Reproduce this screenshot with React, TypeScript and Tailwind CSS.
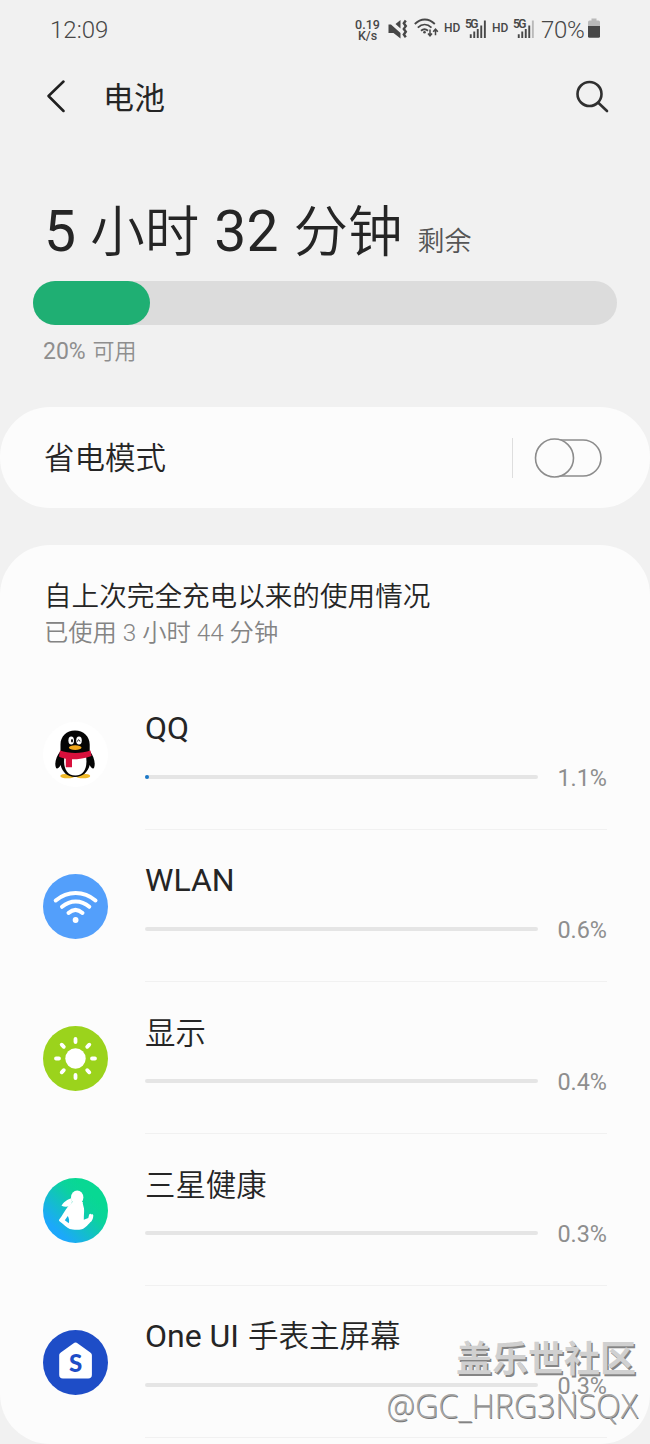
import React from 'react';

type Usage = {
  name: React.ReactNode;
  percent: string;
  value: number;
  icon: React.ReactNode;
  nameClass: string;
};

const QQIcon = () => (
  <svg viewBox="0 0 65 65" className="h-[65px] w-[65px]">
    <circle cx="32.5" cy="32.5" r="32.5" fill="#fff" />
    <ellipse cx="24.5" cy="54" rx="7.2" ry="2.3" fill="#f0b92a" />
    <ellipse cx="40" cy="54" rx="7.2" ry="2.3" fill="#f0b92a" />
    <path d="M32 8.500c-8.500 0-14.500 6-14.500 14v6.500c-3 4-5.200 8.500-5.200 13 0 2.500.8 4.500 1.700 4.500 1.200 0 2.600-1.500 3.600-3.500 1.500 7 6.900 12 14.400 12s13.200-5 14.700-12c1 2 2.200 3.500 3.400 3.500.9 0 1.600-2 1.600-4.500 0-4.500-2-9-5-13v-6.500c0-8-6.200-14-14.700-14z" fill="#050505" />
    <path d="M21.500 34c-1.500 10 1 19.500 10.800 19.500s12.300-9.500 10.700-19.500z" fill="#fff" />
    <path d="M17 28.500c8.500 3.300 22 3.300 30.500 0l1 5.500c-6 2.500-13 3.300-19.500 3.300v8h-6.200v-8.500c-3-.5-5.300-1.300-6.800-2.300z" fill="#d8103c" />
    <ellipse cx="28.200" cy="18.500" rx="2.800" ry="3.900" fill="#fff" />
    <ellipse cx="36" cy="18.500" rx="2.800" ry="3.900" fill="#fff" />
    <ellipse cx="29" cy="18.800" rx="1" ry="1.700" fill="#111" />
    <path d="M34.500 19.500c.3-2.200 2-2.200 2.400 0" fill="none" stroke="#111" strokeWidth="1" />
    <ellipse cx="32.200" cy="25.600" rx="6.300" ry="2.400" fill="#f3a81b" />
  </svg>
);

const WlanIcon = () => (
  <svg viewBox="0 0 65 65" className="h-[65px] w-[65px]" fill="none" stroke="#fff" strokeWidth="4" strokeLinecap="round">
    <circle cx="32.5" cy="32.5" r="32.5" fill="#539ffb" stroke="none" />
    <path d="M12.700 26.500c12-10 28-10 39.800 0" />
    <path d="M19 32.800c8.500-7 19-7 27.300 0" />
    <path d="M25.500 39c4.500-4 9.500-4 14 0" />
    <circle cx="32.600" cy="46" r="2.900" fill="#fff" stroke="none" />
  </svg>
);

const DisplayIcon = () => (
  <svg viewBox="0 0 65 65" className="h-[65px] w-[65px]" stroke="#fff" strokeWidth="3.8" strokeLinecap="round">
    <circle cx="32.5" cy="32.5" r="32.5" fill="#9bd31c" stroke="none" />
    <circle cx="32.5" cy="32.5" r="10.2" fill="#fff" stroke="none" />
    <path d="M32.500 13v3M32.500 49v3M13 32.500h3M49 32.500h3M18.700 18.700l2.100 2.100M44.200 44.200l2.100 2.100M18.700 46.300l2.100-2.100M44.200 20.800l2.100-2.100" />
  </svg>
);

const HealthIcon = () => (
  <svg viewBox="0 0 65 65" className="h-[65px] w-[65px]">
    <defs>
      <linearGradient id="health" x1="0.25" y1="0.85" x2="0.8" y2="0.3">
        <stop offset="0" stopColor="#1ca8fb" />
        <stop offset="0.75" stopColor="#0bd39c" />
        <stop offset="1" stopColor="#08d893" />
      </linearGradient>
    </defs>
    <circle cx="32.5" cy="32.5" r="32.5" fill="url(#health)" />
    {/* head and ponytail */}
    <ellipse cx="34.200" cy="19.500" rx="6.200" ry="7" fill="#fff" />
    <path d="M28.500 20c-2.500 1.500-6.500 2-10 7.800 4 1.800 9 1.500 10.500-3.800z" fill="#fff" />
    {/* torso and arms */}
    <path d="M29.500 24h10.300c-.3 2 .8 4 1.200 6.500.4 3-.2 6-.2 11.200l4.500-1.700.8-3.200c.5-1.400 2-1.200 2.300-.2 1.100-.8 2-.1 1.900 1.200-.2 2.600-.8 4.300-2 5.700-2.800 2-5.300 6.500-9.500 7.800-4 .9-9 .6-12-.3-2.800-1.500-6-4.200-10-7.500-.9-.7-1.100-1.500-.4-2.300 2.600-2.900 5.600-9 8.800-12.900 1-1.100 2.300-1.800 4.300-4.300z" fill="#fff" />
    <path d="M24.800 38l-3 4.200 4 3c.7-2.500.2-4.700-1-7.200z" fill="#15b2e4" />
  </svg>
);

const WatchIcon = () => (
  <svg viewBox="0 0 65 65" className="h-[65px] w-[65px]">
    <circle cx="32.5" cy="32.5" r="32.5" fill="#1e4dc7" />
    <path d="M30.300 13.400c1.500-1.200 3-1.200 4.500 0l12.500 9.200c1.100.9 1.600 1.700 1.600 3v19.200c0 2.500-1.300 3.700-3.700 3.700h-25.300c-2.400 0-3.700-1.200-3.700-3.700v-19.200c0-1.300.5-2.100 1.600-3z" fill="#fff" />
    <text x="32.700" y="42.300" textAnchor="middle" fontSize="24" fontWeight="900" fill="#1e4dc7" className="font-['Lato',sans-serif]">S</text>
  </svg>
);

const MuteIcon = () => (
  <svg viewBox="0 0 20 20" className="h-5 w-5" fill="#474747">
    <path d="M.5 5.500h2.500l9.500 8.500v5.500l-7-5.500h-5zM12.500 1v8.500L7.500 5z" />
    <path d="M17.800 1.500l-2 2.800 2 2.800-2 2.800 2 2.800-2 2.800 2 2.800" fill="none" stroke="#474747" strokeWidth="2.400" />
  </svg>
);

const WifiStatusIcon = () => (
  <svg viewBox="0 0 25 20" className="h-5 w-[25px]" fill="none" stroke="#474747" strokeWidth="1.8">
    <path d="M.8 6c6-6 14-6 20 0M3.800 9.600c4.200-4 9.500-4 13.700 0M7 12.800c2.300-2 4.700-2 7 0" />
    <circle cx="10.500" cy="14.300" r="1.300" fill="#474747" stroke="none" />
    <path d="M16 11.500v6M14 15.500l2 2.300 2-2.300M21.500 17.300v-5.600M19.200 13.800l2.300-2.600 2.300 2.600" strokeWidth="1.5" />
  </svg>
);

const Signal = ({ weak }: { weak?: boolean }) => (
  <svg viewBox="0 -4 22 24" className="h-6 w-[22px] overflow-visible" fill="#474747">
    <text x="0" y="9" fontSize="12" fontWeight="600" textLength="13.5" className="font-['Roboto',sans-serif]">5G</text>
    <path d="M4.800 15.300h1.900v3.700H4.800zM8.300 12.500h1.900v6.500H8.300zM11.800 10h1.900v9h-1.900zM15.300 6.500h1.900v12.500h-1.900z" />
    <path d="M18.900 1.500h1.900v17.500h-1.900z" fill={weak ? '#b9b9b9' : '#474747'} />
  </svg>
);

const StatusBar = () => (
  <div className="flex h-[60px] shrink-0 items-center pl-[50px] text-[#474747]">
    <span className="w-[305px] text-[24px] font-light leading-6">12:09</span>
    <div className="w-[25px] whitespace-nowrap text-center text-[12.5px] font-medium leading-[11px]">
      <div>0.19</div>
      <div>K/s</div>
    </div>
    <div className="-mt-0.5 ml-2"><MuteIcon /></div>
    <div className="-mt-1 ml-[6px]"><WifiStatusIcon /></div>
    <span className="-mt-1 ml-[5px] w-[17px] text-[12px] font-medium leading-4">HD</span>
    <div className="-mt-1.5 ml-[4px]"><Signal /></div>
    <span className="-mt-1 ml-[5px] w-[17px] text-[12px] font-medium leading-4">HD</span>
    <div className="-mt-1.5 ml-[4px]"><Signal weak /></div>
    <span className="ml-[6px] w-[47px] text-[24px] font-light leading-6 tracking-[-0.3px]">70%</span>
    <svg viewBox="0 0 12 20" className="-mt-1 h-5 w-3">
      <path d="M3.500 0.500h5v2h2q1.500 0 1.500 1.500v5H0v-5q0-1.500 1.500-1.500h2z" fill="#b9b9b9" />
      <path d="M0 8h12v10.200q0 1.500-1.500 1.500h-9q-1.500 0-1.500-1.500z" fill="#474747" />
    </svg>
  </div>
);

const usages: Usage[] = [
  { name: 'QQ', percent: '1.1%', value: 1.1, icon: <QQIcon />, nameClass: 'text-[32px] leading-10' },
  { name: 'WLAN', percent: '0.6%', value: 0, icon: <WlanIcon />, nameClass: 'text-[32px] leading-10' },
  { name: '显示', percent: '0.4%', value: 0, icon: <DisplayIcon />, nameClass: 'text-[30.4px] leading-[43px] font-[350]' },
  { name: '三星健康', percent: '0.3%', value: 0, icon: <HealthIcon />, nameClass: 'text-[30.4px] leading-[43px] font-[350]' },
  {
    name: <>One UI <span className="ml-px text-[30.5px] font-[350]">手表主屏幕</span></>,
    percent: '0.3%',
    value: 0,
    icon: <WatchIcon />,
    nameClass: 'text-[32px] leading-[41px]',
  },
];

const UsageRow = ({ item }: { item: Usage }) => (
  <div className="flex h-[152.2px] shrink-0 pl-[43px]">
    <div className="pt-[44px]">{item.icon}</div>
    <div className="ml-[37px] w-[462px] border-b border-[#f1f1f1] pt-[30px]">
      <div className={`h-10 whitespace-nowrap text-[#252525] ${item.nameClass}`}>{item.name}</div>
      <div className="mt-[14px] flex h-[30px] items-center">
        <div className="h-1 w-[393px] rounded-full bg-[#e5e5e5]">
          {item.value > 0 && (
            <div className="h-1 rounded-full bg-[#1a78c8]" style={{ width: `${item.value}%` }} />
          )}
        </div>
        <span className="ml-auto h-[30px] text-[23.4px] leading-[32px] text-[#8e8e8e]">{item.percent}</span>
      </div>
    </div>
  </div>
);

const App: React.FC = () => {
  return (
    <div className="relative flex h-[1444px] w-[650px] flex-col overflow-hidden bg-[#f1f1f1] font-['Roboto','Noto_Sans_CJK_SC',sans-serif]">
      <StatusBar />

      {/* Title bar */}
      <header className="flex h-[73px] shrink-0 items-center pl-[46px] pr-[41px]">
        <svg viewBox="0 0 20 34" className="h-[34px] w-5" fill="none" stroke="#202020" strokeWidth="2.5" strokeLinecap="round" strokeLinejoin="round">
          <path d="M17.500 1.500L2.500 16L17.500 31" />
        </svg>
        <h1 className="ml-[37px] mt-[4px] text-[31px] leading-10 text-[#252525]">电池</h1>
        <svg viewBox="0 0 34 34" className="ml-auto h-[34px] w-[34px]" fill="none" stroke="#303030" strokeWidth="2.6" strokeLinecap="round">
          <circle cx="14.500" cy="14" r="12" />
          <path d="M23.300 22.800l8.700 8.200" />
        </svg>
      </header>

      {/* Remaining time */}
      <section className="h-[274px] shrink-0 px-[33px] pt-[65px]">
        <div className="flex h-[68px] items-baseline pl-[11px] leading-[68px] text-[#252525]">
          <span className="whitespace-pre text-[57px]">5 </span>
          <span className="text-[54.5px] font-[350]">小时</span>
          <span className="ml-px whitespace-pre text-[57px]"> 32 </span>
          <span className="ml-px text-[54.5px] font-[350]">分钟</span>
          <span className="ml-[15px] text-[27px] font-[350] text-[#555]">剩余</span>
        </div>
        <div className="mt-[15px] h-[44px] rounded-full bg-[#dcdcdc]">
          <div className="h-full w-[117px] rounded-full bg-[#1faf73]" />
        </div>
        <div className="mt-[11px] pl-[10px] text-[23px] leading-[32px] text-[#8e8e8e]">
          20% <span className="ml-px text-[22px] font-[350]">可用</span>
        </div>
      </section>

      {/* Power saving */}
      <section className="flex h-[101px] shrink-0 items-center rounded-[50px] bg-[#fcfcfc] pl-[44px]">
        <span className="mt-0.5 text-[30.5px] font-[350] leading-10 text-[#252525]">省电模式</span>
        <div className="ml-auto mr-[21px] h-10 w-px bg-[#dedede]" />
        <svg viewBox="0 0 68 40" className="mr-[48px] h-10 w-[68px]" fill="#fcfcfc" stroke="#8c8c8c" strokeWidth="1.6">
          <rect x="2" y="2" width="65" height="36" rx="18" />
          <circle cx="20.500" cy="20" r="19" />
        </svg>
      </section>

      {/* Usage list */}
      <section className="mt-[37px] flex h-[899px] shrink-0 flex-col rounded-[50px] bg-[#fcfcfc]">
        <div className="h-[132.5px] shrink-0 pl-[44px] pt-[32px]">
          <h2 className="h-10 text-[27.6px] font-[350] leading-10 text-[#252525]">自上次完全充电以来的使用情况</h2>
          <p className="-mt-px h-[34px] text-[24.3px] font-[350] leading-[34px] text-[#848484]">已使用 3 小时 44 分钟</p>
        </div>
        {usages.map((item, i) => (
          <UsageRow key={i} item={item} />
        ))}
      </section>

      {/* Watermark */}
      <div className="absolute right-3 top-[1337px] flex flex-col items-end whitespace-nowrap">
        <span className="mr-0.5 h-[46px] text-[36px] font-bold leading-[46px] text-[#d0d0d0] [text-shadow:1.5px_1.5px_0_#858585]">盖乐世社区</span>
        <span className="h-[46px] font-['Open_Sans',sans-serif] text-[32.2px] font-light leading-[46px] text-[#a5a5a5] [text-shadow:0.7px_0.7px_0_#777]">@GC_HRG3NSQX</span>
      </div>
    </div>
  );
};

export default App;
